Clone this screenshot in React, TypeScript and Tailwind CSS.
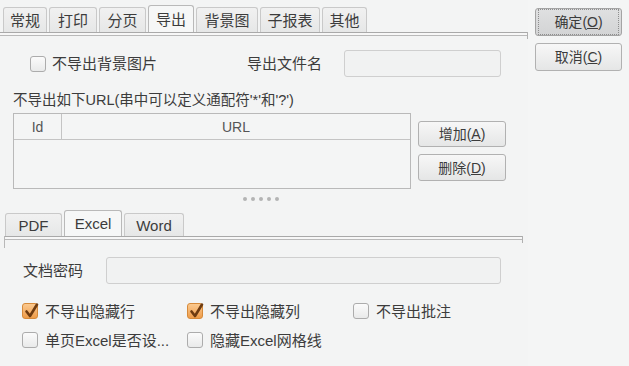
import React from "react";

const FONT = "font-['Liberation_Sans','Noto_Sans_CJK_SC',sans-serif]";

function Tab({ label, selected, w, h, hs }: { label: string; selected?: boolean; w: string; h: string; hs: string }) {
  return (
    <div
      className={
        "flex items-center justify-center border border-b-0 rounded-t-[3px] text-[15px] text-[#3c3c3c] leading-none " +
        w +
        " " +
        (selected
          ? hs + " border-[#b9b9b9] bg-[#f6f7f7]"
          : h + " border-[#c9c9c9] bg-gradient-to-b from-[#f1f1f1] to-[#e6e7e7]")
      }
    >
      {label}
    </div>
  );
}

function Check({ checked }: { checked?: boolean }) {
  if (checked) {
    return (
      <div className="relative w-[16px] h-[16px] shrink-0 rounded-[3px] border border-[#d68a3a] bg-gradient-to-b from-[#fbc98e] to-[#ee9c48]">
        <svg className="absolute left-[0px] top-[-3px]" width="17" height="19" viewBox="0 0 17 19">
          <path d="M3.5 10.5 L7 15 L14 3.5" fill="none" stroke="#6e3b10" strokeWidth="2.6" strokeLinecap="round" strokeLinejoin="round" />
        </svg>
      </div>
    );
  }
  return <div className="w-[16px] h-[16px] shrink-0 rounded-[3px] border border-[#acacac] bg-gradient-to-b from-[#fbfbfb] to-[#e9eaea]" />;
}

function Btn({ text, u, h, focused }: { text: string; u: string; h: string; focused?: boolean }) {
  return (
    <div
      className={
        "flex items-center justify-center rounded-[3px] border text-[14px] text-[#3c3c3c] leading-none " +
        h +
        " " +
        (focused
          ? "border-[#a4a4a4] bg-gradient-to-b from-[#dfe0e1] to-[#d3d4d5]"
          : "border-[#b1b1b1] bg-gradient-to-b from-[#f7f7f7] to-[#e5e6e6]")
      }
    >
      <div
        className={
          "flex items-center justify-center w-full h-full " +
          (focused ? "m-[2px] border border-dotted border-[#8e8e8e]" : "")
        }
      >
        {text}(<span className="underline">{u}</span>)
      </div>
    </div>
  );
}

export default function App() {
  return (
    <div className={"w-[629px] h-[366px] flex bg-[#f3f4f4] overflow-hidden " + FONT}>
      {/* left section */}
      <div className="w-[528px] flex flex-col">
        {/* top tabs */}
        <div className="pt-[5px] pl-[3px] h-[32px] flex items-end gap-[2px]">
          <Tab label="常规" w="w-[44px]" h="h-[25px]" hs="h-[27px]" />
          <Tab label="打印" w="w-[48px]" h="h-[25px]" hs="h-[27px]" />
          <Tab label="分页" w="w-[47px]" h="h-[25px]" hs="h-[27px]" />
          <Tab label="导出" selected w="w-[46px]" h="h-[25px]" hs="h-[27px]" />
          <Tab label="背景图" w="w-[62px]" h="h-[25px]" hs="h-[27px]" />
          <Tab label="子报表" w="w-[60px]" h="h-[25px]" hs="h-[27px]" />
          <Tab label="其他" w="w-[45px]" h="h-[25px]" hs="h-[27px]" />
        </div>
        <div className="flex items-start h-[4px]">
          <div className="w-[527px] h-[4px] border-y border-t-[#a9a9a9] border-b-[#b9b9b9] bg-[#f7f7f7]" />
          <div className="w-[1px] h-[7px] mb-[-3px] bg-[#b0b0b0]" />
        </div>

        {/* row 1 */}
        <div className="mt-[14px] h-[27px] pl-[30px] flex items-center text-[15px] text-[#3c3c3c]">
          <Check />
          <span className="ml-[6px] leading-none">不导出背景图片</span>
          <span className="ml-[90px] leading-none">导出文件名</span>
          <div className="ml-[22px] w-[157px] h-[27px] rounded-[3px] border border-[#cfcfcf] bg-[#f1f2f2]" />
        </div>

        {/* URL label */}
        <div className="mt-[15px] pl-[13px] h-[17px] text-[14.5px] leading-[17px] text-[#3c3c3c] whitespace-nowrap">
          不导出如下URL(串中可以定义通配符'*'和'?')
        </div>

        {/* table + buttons */}
        <div className="mt-[4px] pl-[13px] flex items-start">
          <div className="w-[398px] h-[76px] border border-[#b9b9b9] bg-[#f4f5f5] flex flex-col">
            <div className="h-[26px] flex border-b border-[#c4c4c4] text-[14px] text-[#555] leading-none">
              <div className="w-[48px] border-r border-[#c4c4c4] flex items-center justify-center">Id</div>
              <div className="flex-1 flex items-center justify-center">URL</div>
            </div>
          </div>
          <div className="ml-[7px] mt-[8px] w-[88px] flex flex-col gap-[7px]">
            <Btn text="增加" u="A" h="h-[26px]" />
            <Btn text="删除" u="D" h="h-[27px]" />
          </div>
        </div>

        {/* dots */}
        <div className="mt-[8px] pl-[243px] flex gap-[4px]">
          <div className="w-[4px] h-[4px] rounded-full bg-[#b4b4b4]" />
          <div className="w-[4px] h-[4px] rounded-full bg-[#b4b4b4]" />
          <div className="w-[4px] h-[4px] rounded-full bg-[#b4b4b4]" />
          <div className="w-[4px] h-[4px] rounded-full bg-[#b4b4b4]" />
          <div className="w-[4px] h-[4px] rounded-full bg-[#b4b4b4]" />
        </div>

        {/* inner tabs */}
        <div className="mt-[9px] pl-[5px] h-[26px] flex items-end gap-[2px]">
          <Tab label="PDF" w="w-[57px]" h="h-[23px]" hs="h-[26px]" />
          <Tab label="Excel" selected w="w-[58px]" h="h-[23px]" hs="h-[26px]" />
          <Tab label="Word" w="w-[60px]" h="h-[23px]" hs="h-[26px]" />
        </div>
        <div className="ml-[4px] flex items-start h-[4px]">
          <div className="w-[1px] h-[12px] mb-[-8px] bg-[#b8b8b8]" />
          <div className="w-[517px] h-[4px] border-y border-t-[#a9a9a9] border-b-[#b9b9b9] bg-[#f7f7f7]" />
          <div className="w-[1px] h-[7px] mb-[-3px] bg-[#b0b0b0]" />
        </div>

        {/* password */}
        <div className="mt-[17px] h-[27px] pl-[23px] flex items-center text-[15px] text-[#3c3c3c]">
          <span className="leading-none">文档密码</span>
          <div className="ml-[23px] w-[395px] h-[27px] rounded-[3px] border border-[#cfcfcf] bg-[#f1f2f2]" />
        </div>

        {/* checkboxes */}
        <div className="mt-[17px] pl-[22px] grid grid-cols-[165px_166px_150px] gap-y-[9px] text-[15px] text-[#3c3c3c]">
          <div className="h-[20px] flex items-center">
            <Check checked />
            <span className="ml-[7px] leading-none">不导出隐藏行</span>
          </div>
          <div className="h-[20px] flex items-center">
            <Check checked />
            <span className="ml-[7px] leading-none">不导出隐藏列</span>
          </div>
          <div className="h-[20px] flex items-center">
            <Check />
            <span className="ml-[7px] leading-none">不导出批注</span>
          </div>
          <div className="h-[20px] flex items-center">
            <Check />
            <span className="ml-[7px] leading-none whitespace-nowrap">单页Excel是否设...</span>
          </div>
          <div className="h-[20px] flex items-center">
            <Check />
            <span className="ml-[7px] leading-none whitespace-nowrap">隐藏Excel网格线</span>
          </div>
        </div>
      </div>

      {/* right section */}
      <div className="flex-1 pt-[8px] pl-[7px] flex flex-col gap-[7px] bg-[#f4f5f5]">
        <div className="w-[87px]">
          <Btn text="确定" u="O" h="h-[28px]" focused />
        </div>
        <div className="w-[87px]">
          <Btn text="取消" u="C" h="h-[28px]" />
        </div>
      </div>
    </div>
  );
}
